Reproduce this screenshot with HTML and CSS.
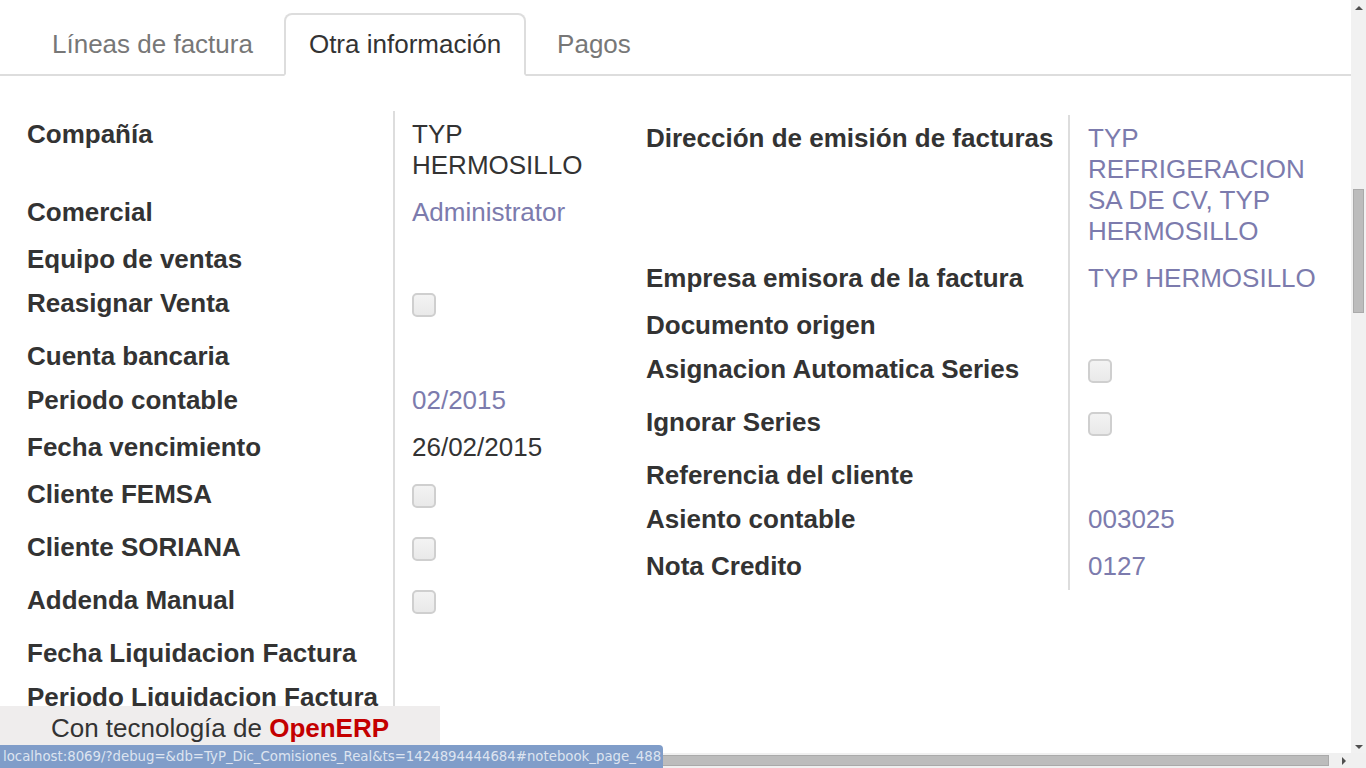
FILE: index.html
```html
<!DOCTYPE html>
<html lang="es">
<head>
<meta charset="utf-8">
<title>Otra información</title>
<link rel="stylesheet" href="styles.css">
</head>
<body>
<div class="screen">
  <div class="viewport">
    <ul class="tabs">
      <li class="tab">Líneas de factura</li>
      <li class="tab active">Otra información</li>
      <li class="tab">Pagos</li>
    </ul>
    <div class="sheet">
      <div class="group group-left">
        <div class="lbl">Compañía</div>
        <div class="val txt">TYP HERMOSILLO</div>
        <div class="lbl">Comercial</div>
        <div class="val txt link">Administrator</div>
        <div class="lbl">Equipo de ventas</div>
        <div class="val empty"></div>
        <div class="lbl">Reasignar Venta</div>
        <div class="val chk"><span class="box"></span></div>
        <div class="lbl">Cuenta bancaria</div>
        <div class="val empty"></div>
        <div class="lbl">Periodo contable</div>
        <div class="val txt link">02/2015</div>
        <div class="lbl">Fecha vencimiento</div>
        <div class="val txt">26/02/2015</div>
        <div class="lbl">Cliente FEMSA</div>
        <div class="val chk"><span class="box"></span></div>
        <div class="lbl">Cliente SORIANA</div>
        <div class="val chk"><span class="box"></span></div>
        <div class="lbl">Addenda Manual</div>
        <div class="val chk"><span class="box"></span></div>
        <div class="lbl">Fecha Liquidacion Factura</div>
        <div class="val empty"></div>
        <div class="lbl">Periodo Liquidacion Factura</div>
        <div class="val empty"></div>
        <div class="lbl">Estado Liquidacion</div>
        <div class="val empty"></div>
      </div>
      <div class="group group-right">
        <div class="lbl">Dirección de emisión de facturas</div>
        <div class="val txt link">TYP REFRIGERACION SA DE CV, TYP HERMOSILLO</div>
        <div class="lbl">Empresa emisora de la factura</div>
        <div class="val txt link">TYP HERMOSILLO</div>
        <div class="lbl">Documento origen</div>
        <div class="val empty"></div>
        <div class="lbl">Asignacion Automatica Series</div>
        <div class="val chk"><span class="box"></span></div>
        <div class="lbl">Ignorar Series</div>
        <div class="val chk"><span class="box"></span></div>
        <div class="lbl">Referencia del cliente</div>
        <div class="val empty"></div>
        <div class="lbl">Asiento contable</div>
        <div class="val txt link">003025</div>
        <div class="lbl">Nota Credito</div>
        <div class="val txt link">0127</div>
      </div>
    </div>
  </div>
  <div class="vscroll">
    <span class="arrow arrow-up"></span>
    <div class="vtrack"><span class="vthumb"></span></div>
    <span class="arrow arrow-down"></span>
  </div>
  <div class="hscroll">
    <div class="htrack"><span class="hthumb"></span></div>
    <span class="arrow arrow-right"></span>
  </div>
  <div class="corner"></div>
  <div class="powered">Con tecnología de <b>OpenERP</b></div>
  <div class="statusbar">localhost:8069/?debug=&amp;db=TyP_Dic_Comisiones_Real&amp;ts=1424894444684#notebook_page_488</div>
</div>
</body>
</html>
```

FILE: styles.css
```css
* { box-sizing: border-box; }
html, body { margin: 0; padding: 0; overflow: hidden; background: #fff; }
body { font-family: "Liberation Sans", Arial, sans-serif; color: #333; }

.screen {
  position: relative;
  width: 1366px;
  height: 768px;
  display: grid;
  grid-template-columns: 1351px 15px;
  grid-template-rows: 753px 15px;
}

.viewport { overflow: hidden; background: #fff; }

/* Tabs */
.tabs {
  list-style: none;
  margin: 0;
  padding: 13px 0 0 27px;
  display: flex;
  gap: 6px;
  border-bottom: 2px solid #ddd;
}
.tab {
  height: 63px;
  margin-bottom: -2px;
  padding: 0 23px;
  border: 2px solid transparent;
  border-radius: 8px 8px 0 0;
  font-size: 26px;
  line-height: 59px;
  color: #777;
  white-space: nowrap;
}
.tab.active {
  color: #333;
  background: #fff;
  border-color: #ddd #ddd transparent #ddd;
}

/* Form */
.sheet { display: flex; align-items: flex-start; }
.group { display: grid; font-size: 26px; line-height: 31px; }
.group-left { width: 620px; grid-template-columns: 395px 225px; margin-top: 35px; }
.group-right { width: 713px; grid-template-columns: 450px 263px; margin-top: 39px; }

.lbl {
  font-weight: bold;
  color: #333;
  padding-top: 8px;
  border-right: 2px solid #ddd;
  white-space: nowrap;
}
.group-left .lbl { padding-left: 27px; }
.group-right .lbl { padding-left: 26px; }

.val { color: #333; }
.group-left .val { padding-left: 17px; }
.group-right .val { padding-left: 18px; }
.val.txt { padding-top: 8px; padding-bottom: 8px; }
.val.empty { height: 44px; }
.val.chk { height: 53px; padding-top: 13px; }
.link { color: #7c7bad; }

.box {
  display: block;
  width: 24px;
  height: 24px;
  border: 2px solid #cfcfcf;
  border-radius: 5px;
  background: linear-gradient(#f3f3f3, #e9e9e9);
}

/* Scrollbars */
.vscroll {
  background: #f1f1f1;
  display: flex;
  flex-direction: column;
  align-items: center;
}
.vtrack { flex: 1; width: 100%; padding: 0 2px; }
.vthumb {
  display: block;
  margin-top: 174px;
  height: 124px;
  background: #bcbcbc;
  border: 1px solid #aaa;
}
.arrow { width: 0; height: 0; border-style: solid; }
.arrow-up {
  margin-top: 6px;
  margin-bottom: 5px;
  border-width: 0 4px 4px 4px;
  border-color: transparent transparent #505050 transparent;
}
.arrow-down {
  margin-top: 5px;
  margin-bottom: 4px;
  border-width: 4px 4px 0 4px;
  border-color: #505050 transparent transparent transparent;
}
.hscroll {
  background: #f0f0f0;
  display: flex;
  align-items: center;
}
.htrack { width: 1329px; padding: 2px 0; }
.hthumb {
  display: block;
  height: 11px;
  background: #bcbcbc;
  border: 1px solid #aaa;
}
.arrow-right {
  margin-left: 13px;
  border-width: 4px 0 4px 4px;
  border-color: transparent transparent transparent #505050;
}
.corner { background: #f0f0f0; }

/* Overlays */
.powered {
  position: absolute;
  left: 0;
  top: 706px;
  width: 440px;
  height: 46px;
  background: #efeded;
  font-size: 26px;
  line-height: 44px;
  text-align: center;
  color: #333;
}
.powered b { color: #c40000; }

.statusbar {
  position: absolute;
  left: 0;
  top: 745px;
  width: 663px;
  height: 23px;
  padding-left: 3px;
  background: #809dc9;
  border-top-right-radius: 4px;
  font-family: "DejaVu Sans", sans-serif;
  font-size: 13.3px;
  line-height: 23px;
  color: #dde4f0;
  white-space: nowrap;
  overflow: hidden;
}
```
